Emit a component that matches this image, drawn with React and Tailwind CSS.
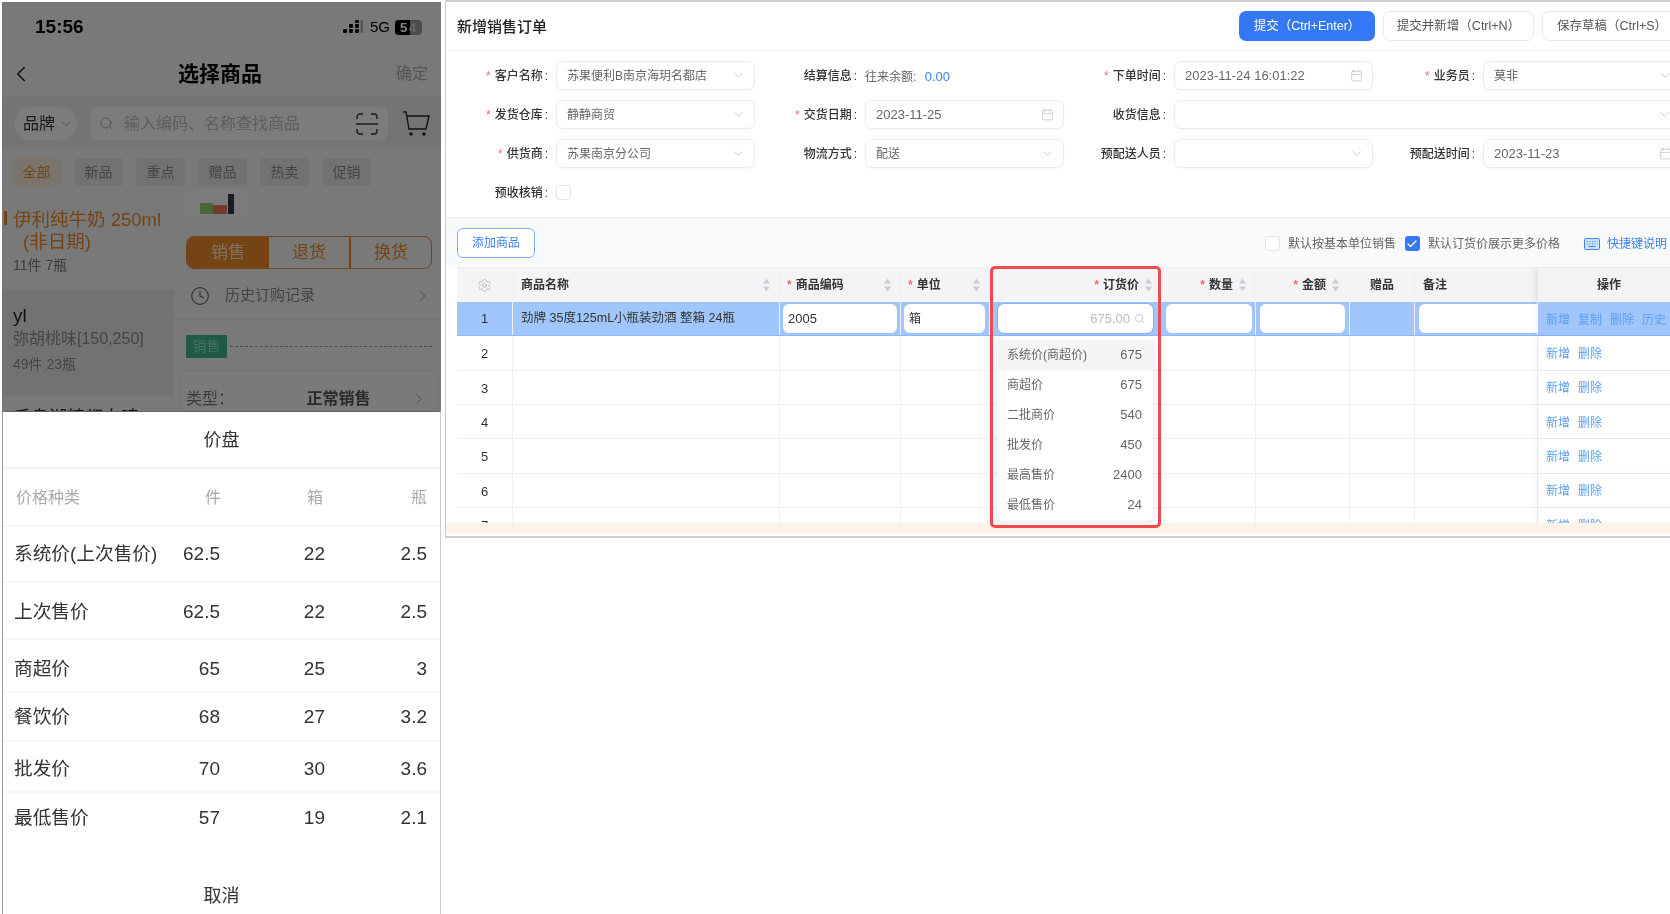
import React from "react";
import { ChevronDown, ChevronLeft, ChevronRight, Calendar, Search, Settings, Check, Clock } from "lucide-react";

const req = <span className="text-[#f56c6c] mr-[4px]">*</span>;

function FLabel({ r, children }) {
  return (
    <div className="w-[110px] h-[29px] shrink-0 pr-[8px] text-right text-[12px] leading-[31px] text-[#333] font-medium whitespace-nowrap">
      {r && req}
      {children}
      <span className="ml-[2px]">:</span>
    </div>
  );
}

function Field({ children, icon = "down", w = "w-[199px]", num }) {
  return (
    <div className={`${w} h-[29px] shrink-0 flex items-center justify-between pl-[10px] pr-[8px] rounded-[7px] border border-[#ececec] shadow-[0_1px_2px_rgba(0,0,0,0.03)] ${num ? "text-[13px]" : "text-[12px]"} text-[#666] bg-white`}>
      <span className="whitespace-nowrap">{children}</span>
      {icon === "down" ? (
        <ChevronDown size={15} strokeWidth={1.2} className="text-[#bbb]" />
      ) : (
        <Calendar size={13} strokeWidth={1.2} className="text-[#bbb] mr-[1px]" />
      )}
    </div>
  );
}

function Sort() {
  return (
    <svg width="7" height="14" viewBox="0 0 7 14" className="shrink-0">
      <path d="M3.5 0.5L7 5.5H0Z" fill="#c9ccd1" />
      <path d="M3.5 13.5L7 8.5H0Z" fill="#c9ccd1" />
    </svg>
  );
}

const gridCols = "grid grid-cols-[56px_267px_121px_89px_171px_95px_94px_65px_123px_142px]";

function Cell({ className = "", children }) {
  return <div className={`border-r border-[#eeeff1] ${className}`}>{children}</div>;
}

function RowInput({ className = "", children }) {
  return (
    <div className={`h-[29px] bg-white rounded-[6px] flex items-center text-[#333] ${className}`}>{children}</div>
  );
}

function Ops({ list, selected }) {
  return (
    <div className={`relative z-10 h-full flex items-center gap-[8px] pl-[8px] pt-[2px] text-[12px] text-[#5b9ef5] shadow-[-4px_0_6px_rgba(0,0,0,0.03)] whitespace-nowrap ${selected ? "bg-[#a0c6fb]" : "bg-white"}`}>
      {list.map((t) => (
        <span key={t}>{t}</span>
      ))}
    </div>
  );
}

const sheetRows = [
  ["系统价(上次售价)", "62.5", "22", "2.5", "h-[56px]"],
  ["上次售价", "62.5", "22", "2.5", "h-[57px] pt-[4px]"],
  ["商超价", "65", "25", "3", "h-[53px] pt-[8px]"],
  ["餐饮价", "68", "27", "3.2", "h-[49px] pt-[2px]"],
  ["批发价", "70", "30", "3.6", "h-[51px] pt-[6px]"],
  ["最低售价", "57", "19", "2.1", "h-[50px]"],
];

const priceOptions = [
  ["系统价(商超价)", "675"],
  ["商超价", "675"],
  ["二批商价", "540"],
  ["批发价", "450"],
  ["最高售价", "2400"],
  ["最低售价", "24"],
];

function Phone() {
  return (
    <div className="ml-[2px] mt-[2px] w-[439px] h-[912px] shrink-0 flex flex-col">
      {/* dimmed page */}
      <div className="relative h-[409px] shrink-0 overflow-hidden bg-[#f2f2f2]">
        <div className="h-[46px] flex items-center justify-between pl-[33px] pr-[19px] pt-[4px] text-black">
          <span className="text-[19px] font-semibold">15:56</span>
          <div className="flex items-center">
            <svg width="20" height="14" viewBox="0 0 20 14" className="mr-[7px]">
              <g fill="#000">
                <rect x="0" y="9" width="4" height="4" rx="1" />
                <rect x="6" y="9" width="4" height="4" rx="1" />
                <rect x="12" y="9" width="4" height="4" rx="1" />
                <rect x="6" y="4" width="4" height="4" rx="1" />
                <rect x="12" y="4" width="4" height="4" rx="1" />
                <rect x="12" y="0" width="4" height="3" rx="1" />
              </g>
              <rect x="17.5" y="0" width="2.5" height="13" rx="1" fill="#aaa" />
            </svg>
            <span className="text-[15px] font-medium mr-[5px]">5G</span>
            <div className="relative w-[27px] h-[15px] rounded-[4px] bg-[#999] overflow-hidden">
              <div className="w-[15px] h-full bg-black" />
              <span className="absolute left-[5px] top-0 text-[13px] leading-[15px] font-bold text-white">5</span>
              <span className="absolute left-[14px] top-0 text-[13px] leading-[15px] font-bold text-[#ccc]">4</span>
            </div>
          </div>
        </div>
        <div className="h-[50px] pt-[2px] flex items-center justify-between pl-[6px] pr-[13px] border-b border-[#e6e6e6]">
          <div className="w-[40px]"><ChevronLeft size={26} strokeWidth={1.5} className="text-[#222]" /></div>
          <span className="pl-[4px] pt-[1px] text-[21px] font-semibold text-black">选择商品</span>
          <span className="w-[40px] text-right text-[16px] text-[#aaa]">确定</span>
        </div>
        <div className="h-[50px] pt-[2px] flex items-center pl-[12px] border-b border-[#e6e6e6] bg-[#e8e8e8]">
          <div className="w-[63px] h-[33px] rounded-full bg-[#f8f8f8] flex items-center justify-between pl-[9px] pr-[4px] text-[16px] text-[#333]">
            品牌
            <ChevronDown size={14} strokeWidth={1.3} className="text-[#888]" />
          </div>
          <div className="ml-[13px] w-[298px] h-[33px] rounded-[6px] bg-[#f8f8f8] flex items-center pl-[9px] pr-[10px]">
            <Search size={15} strokeWidth={1.3} className="text-[#999]" />
            <span className="ml-[10px] flex-1 text-[16px] text-[#bbb] whitespace-nowrap">输入编码、名称查找商品</span>
            <svg width="22" height="22" viewBox="0 0 22 22" fill="none" stroke="#333" strokeWidth="1.4">
              <path d="M1 6V4a3 3 0 0 1 3-3h3M15 1h3a3 3 0 0 1 3 3v2M1 16v2a3 3 0 0 0 3 3h3M15 21h3a3 3 0 0 0 3-3v-2M0 11h22" />
            </svg>
          </div>
          <svg width="28" height="26" viewBox="0 0 28 26" fill="none" stroke="#222" strokeWidth="1.4" className="ml-[14px]">
            <path d="M1 1h3l3 17h17l3-13H5" />
            <circle cx="9" cy="23" r="1" fill="#222" />
            <circle cx="22" cy="23" r="1" fill="#222" />
          </svg>
        </div>
        <div className="pt-[10px] pl-[10px] flex gap-[13px] text-[14px]">
          <div className="w-[49px] h-[28px] rounded-[3px] bg-[#f6e9da] text-[#e8882a] flex items-center justify-center">全部</div>
          {["新品", "重点", "赠品", "热卖", "促销"].map((t) => (
            <div key={t} className="w-[49px] h-[28px] rounded-[3px] bg-[#e4e4e4] text-[#888] flex items-center justify-center">{t}</div>
          ))}
        </div>
        <div className="flex">
          <div className="w-[172px] shrink-0">
            <div className="relative h-[104px] pt-[23px] pl-[11px]">
              <div className="absolute left-[2px] top-[25px] w-[3px] h-[14px] bg-[#e8882a]" />
              <div className="text-[18.5px] leading-[22px] text-[#e8882a] whitespace-nowrap">伊利纯牛奶 250ml</div>
              <div className="text-[18.5px] leading-[22px] text-[#e8882a] pl-[10px]">(非日期)</div>
              <div className="mt-[2px] text-[14px] leading-[20px] text-[#777]">11件 7瓶</div>
            </div>
            <div className="h-[105px] pt-[14px] pl-[11px] bg-[#e4e4e4]">
              <div className="text-[19px] leading-[24px] text-[#222]">yl</div>
              <div className="mt-[1px] text-[16px] leading-[20px] text-[#888] whitespace-nowrap">弥胡桃味[150,250]</div>
              <div className="mt-[5px] text-[14px] leading-[20px] text-[#888]">49件 23瓶</div>
            </div>
            <div className="pt-[11px] pl-[11px] text-[18px] leading-[24px] text-[#222] whitespace-nowrap">千岛湖精都白啤</div>
          </div>
          <div className="flex-1 min-w-0">
            <div className="ml-[12px] mt-[4px] w-[62px] h-[28px] flex items-center justify-center bg-[#f6f6f6]">
              <svg width="36" height="22" viewBox="0 0 36 22">
                <rect x="1" y="10" width="13" height="11" fill="#8fd06a" />
                <rect x="14" y="12" width="14" height="9" fill="#f0705a" />
                <rect x="29" y="1" width="6" height="20" fill="#2d3648" />
              </svg>
            </div>
            <div className="ml-[12px] mr-[9px] mt-[18px] h-[33px] flex rounded-[8px] border border-[#e8882a] overflow-hidden text-[17px] text-[#e8882a]">
              <div className="w-[82px] bg-[#e8882a] text-[#ffe3c0] flex items-center justify-center">销售</div>
              <div className="w-[82px] border-r-2 border-[#e8882a] flex items-center justify-center">退货</div>
              <div className="flex-1 flex items-center justify-center">换货</div>
            </div>
            <div className="h-[51px] pt-[3px] flex items-center pl-[16px] pr-[9px] border-b border-[#e8e8e8]">
              <Clock size={20} strokeWidth={1.5} className="text-[#666]" />
              <span className="ml-[15px] flex-1 text-[15px] text-[#888]">历史订购记录</span>
              <ChevronRight size={18} strokeWidth={1.3} className="text-[#999]" />
            </div>
            <div className="ml-[12px] mr-[9px] mt-[15px] flex items-center">
              <div className="w-[41px] h-[23px] bg-[#3bb58f] text-[#8ee0c4] text-[14px] flex items-center justify-center">销售</div>
              <div className="ml-[3px] flex-1 border-t border-dashed border-[#999]" />
            </div>
            <div className="ml-[7px] mr-[4px] mt-[13px] h-[60px] rounded-t-[6px] bg-[#f5f5f5] shadow-[0_0_3px_rgba(0,0,0,0.08)] pt-[16px] pl-[5px] pr-[9px] flex justify-between text-[16px] leading-[24px]">
              <span className="text-[#777]">类型：</span>
              <span className="ml-[33px] font-semibold text-[#555]">正常销售</span>
              <ChevronRight size={18} strokeWidth={1.3} className="text-[#999] mt-[3px]" />
            </div>
          </div>
        </div>
        <div className="absolute inset-0 bg-black/50" />
      </div>
      {/* price sheet */}
      <div className="flex-1 flex flex-col bg-white border-l border-r border-l-[#999] border-r-[#ccc] border-t border-t-[#666] text-[#333]">
        <div className="h-[57px] shrink-0 pt-[1px] flex items-center justify-center text-[18px] border-b-2 border-[#f4f4f4]">价盘</div>
        <div className="h-[58px] shrink-0 pt-[1px] grid grid-cols-[170px_48px_105px_102px] items-center text-[16px] text-[#aaa] border-b-2 border-[#f6f6f6]">
          <span className="pl-[13px]">价格种类</span>
          <span className="text-right">件</span>
          <span className="text-right pr-[3px]">箱</span>
          <span className="text-right pr-[1px]">瓶</span>
        </div>
        {sheetRows.map(([n, a, b, c, h], i) => (
          <div key={n} className={`${h} shrink-0 grid grid-cols-[170px_48px_105px_102px] items-center text-[19px] ${i < 5 ? "border-b-2 border-[#f6f6f6]" : ""}`}>
            <span className="pl-[11px] text-[18.7px] whitespace-nowrap">{n}</span>
            <span className="text-right pr-[1px]">{a}</span>
            <span className="text-right pr-[1px]">{b}</span>
            <span className="text-right pr-[1px]">{c}</span>
          </div>
        ))}
        <div className="mt-[41px] text-center text-[18px] leading-[24px]">取消</div>
      </div>
    </div>
  );
}

function Order() {
  const rowH = "h-[34.33px]";
  return (
    <div className="ml-[4px] flex-1 min-w-0 h-[538px] border-t-2 border-b-2 border-l border-[#cdcdcd] flex flex-col bg-white overflow-hidden">
      <div className="h-[49px] shrink-0 flex items-center border-b border-[#f1f1f1] pl-[11px]">
        <span className="pt-[2px] text-[15px] font-medium text-[#222]">新增销售订单</span>
        <div className="ml-auto -mr-[40px] flex gap-[8px] text-[12.5px]">
          <div className="w-[136px] h-[30px] pt-[1px] rounded-[7px] bg-[#3478f6] text-white flex items-center justify-center whitespace-nowrap">提交（Ctrl+Enter）</div>
          <div className="w-[151px] h-[30px] pt-[1px] rounded-[7px] border border-[#e8e8e8] text-[#555] flex items-center justify-center whitespace-nowrap">提交并新增（Ctrl+N）</div>
          <div className="w-[168px] h-[30px] pt-[1px] rounded-[7px] border border-[#e8e8e8] text-[#555] flex items-center pl-[14px] whitespace-nowrap">保存草稿（Ctrl+S）</div>
        </div>
      </div>
      <div className="shrink-0 pt-[10px] pb-[10px] grid grid-cols-[repeat(4,309px)] gap-y-[10px]">
        <div className="flex"><FLabel r>客户名称</FLabel><Field>苏果便利B南京海玥名都店</Field></div>
        <div className="flex">
          <FLabel>结算信息</FLabel>
          <div className="h-[29px] text-[12px] leading-[31px] text-[#666] whitespace-nowrap">往来余额: <span className="text-[13px] text-[#3b82f6] font-medium ml-[5px]">0.00</span></div>
        </div>
        <div className="flex"><FLabel r>下单时间</FLabel><Field icon="cal" num>2023-11-24 16:01:22</Field></div>
        <div className="flex"><FLabel r>业务员</FLabel><Field>莫非</Field></div>

        <div className="flex"><FLabel r>发货仓库</FLabel><Field>静静商贸</Field></div>
        <div className="flex"><FLabel r>交货日期</FLabel><Field icon="cal" num>2023-11-25</Field></div>
        <div className="flex col-span-2"><FLabel>收货信息</FLabel><Field w="w-[507px]"></Field></div>

        <div className="flex"><FLabel r>供货商</FLabel><Field>苏果南京分公司</Field></div>
        <div className="flex"><FLabel>物流方式</FLabel><Field>配送</Field></div>
        <div className="flex"><FLabel>预配送人员</FLabel><Field></Field></div>
        <div className="flex"><FLabel>预配送时间</FLabel><Field icon="cal" num>2023-11-23</Field></div>

        <div className="flex items-center">
          <FLabel>预收核销</FLabel>
          <div className="w-[15px] h-[15px] rounded-[3px] border border-[#e4e4e4] bg-white" />
        </div>
      </div>
      <div className="h-[50px] shrink-0 bg-[#f9fafb] border-t border-[#eeeeee] flex items-center pl-[11px] pr-[3px]">
        <div className="w-[78px] h-[30px] rounded-[6px] border border-[#7fb0f8] bg-white text-[#3b82f6] text-[12px] flex items-center justify-center">添加商品</div>
        <div className="ml-auto pt-[2px] flex items-center text-[12px] text-[#666] whitespace-nowrap">
          <div className="w-[15px] h-[15px] rounded-[3px] border border-[#e4e4e4] bg-white" />
          <span className="ml-[8px]">默认按基本单位销售</span>
          <div className="ml-[9px] w-[15px] h-[15px] rounded-[3px] bg-[#3478f6] flex items-center justify-center">
            <Check size={12} strokeWidth={2.6} className="text-white" />
          </div>
          <span className="ml-[8px]">默认订货价展示更多价格</span>
          <svg width="16" height="12" viewBox="0 0 16 12" className="ml-[24px]">
            <rect x="0.5" y="0.5" width="15" height="11" rx="1" fill="#cfe0fb" stroke="#3b82f6" />
            <path d="M3 3.5h1M5.5 3.5h1M8 3.5h1M10.5 3.5h1M13 3.5h.5M3 6h1M5.5 6h1M8 6h1M10.5 6h1M13 6h.5M4.5 8.5h7" stroke="#3b82f6" strokeWidth="1" fill="none" />
          </svg>
          <span className="ml-[7px] text-[#3b82f6]">快捷键说明</span>
        </div>
      </div>
      <div className="relative flex-1 min-h-0">
        <div className="ml-[11px] h-[256px] overflow-hidden relative">
          <div className={`${gridCols} h-[35px] bg-[#f3f4f6] border-t border-[#eeeff1] text-[12px] font-semibold text-[#333]`}>
            <Cell className="flex items-center justify-center"><Settings size={15} strokeWidth={1.1} className="text-[#aaa]" /></Cell>
            <Cell className="flex items-center justify-between pl-[8px] pr-[9px]">商品名称<Sort /></Cell>
            <Cell className="flex items-center justify-between pl-[7px] pr-[9px]"><span>{req}商品编码</span><Sort /></Cell>
            <Cell className="flex items-center justify-between pl-[7px] pr-[9px]"><span>{req}单位</span><Sort /></Cell>
            <Cell className="flex items-center justify-end gap-[6px] pr-[8px]"><span>{req}订货价</span><Sort /></Cell>
            <Cell className="flex items-center justify-end gap-[6px] pr-[9px]"><span>{req}数量</span><Sort /></Cell>
            <Cell className="flex items-center justify-end gap-[6px] pr-[10px]"><span>{req}金额</span><Sort /></Cell>
            <Cell className="flex items-center justify-center">赠品</Cell>
            <Cell className="flex items-center pl-[8px]">备注</Cell>
            <div className="relative z-10 bg-[#f3f4f6] flex items-center justify-center shadow-[-4px_0_6px_rgba(0,0,0,0.06)]">操作</div>
          </div>
          <div className={`${gridCols} ${rowH} bg-[#a0c6fb] border-b border-[#8ab8f8] text-[#333]`}>
            <Cell className="flex items-center justify-center text-[13px]">1</Cell>
            <Cell className="flex items-center pl-[8px] text-[12.5px] whitespace-nowrap">劲牌 35度125mL小瓶装劲酒 整箱 24瓶</Cell>
            <Cell className="flex items-center pl-[3px] pr-[3px]"><RowInput className="w-full pl-[5px] text-[13px]">2005</RowInput></Cell>
            <Cell className="flex items-center pl-[3px] pr-[4px]"><RowInput className="w-full pl-[5px] text-[12px]">箱</RowInput></Cell>
            <Cell className="flex items-center pl-[8px] pr-[7px]">
              <RowInput className="w-full justify-end pr-[8px] text-[13px] !text-[#bbb] shadow-[0_0_0_1px_#7fb0f8]">
                675.00
                <Search size={11} strokeWidth={1.5} className="ml-[4px]" />
              </RowInput>
            </Cell>
            <Cell className="flex items-center pl-[5px] pr-[3px]"><RowInput className="w-full" /></Cell>
            <Cell className="flex items-center pl-[4px] pr-[4px]"><RowInput className="w-full" /></Cell>
            <Cell />
            <Cell className="flex items-center pl-[4px]"><RowInput className="w-[140px] shrink-0" /></Cell>
            <Ops selected list={["新增", "复制", "删除", "历史"]} />
          </div>
          {[2, 3, 4, 5, 6, 7].map((n) => (
            <div key={n} className={`${gridCols} ${rowH} border-b border-[#eeeff1] text-[13px] text-[#333]`}>
              <Cell className="flex items-center justify-center pt-[2px]">{n}</Cell>
              <Cell /><Cell /><Cell /><Cell /><Cell /><Cell /><Cell /><Cell />
              <Ops list={["新增", "删除"]} />
            </div>
          ))}
          <div className="absolute left-[540px] top-[69px] w-[156px] h-[186px] rounded-[8px] bg-white shadow-[0_2px_6px_rgba(0,0,0,0.12)] pt-[4px] text-[12px] text-[#666]">
            {priceOptions.map(([a, b], i) => (
              <div key={a} className={`h-[30px] flex items-center justify-between pl-[10px] pr-[11px] ${i === 0 ? "bg-[#f5f5f5]" : ""}`}>
                <span>{a}</span>
                <span className="text-[13px]">{b}</span>
              </div>
            ))}
          </div>
        </div>
        <div className="h-[11px] bg-[#fdf3e7]" />
        <div className="absolute left-[544px] -top-[1px] w-[171px] h-[262px] rounded-[5px] border-[3px] border-[#ee4a4f] pointer-events-none" />
      </div>
    </div>
  );
}

export default function App() {
  return (
    <div className="w-[1670px] h-[914px] overflow-hidden bg-white flex items-start blur-[0.5px] font-['Liberation_Sans','Noto_Sans_CJK_SC',sans-serif]">
      <Phone />
      <Order />
    </div>
  );
}
